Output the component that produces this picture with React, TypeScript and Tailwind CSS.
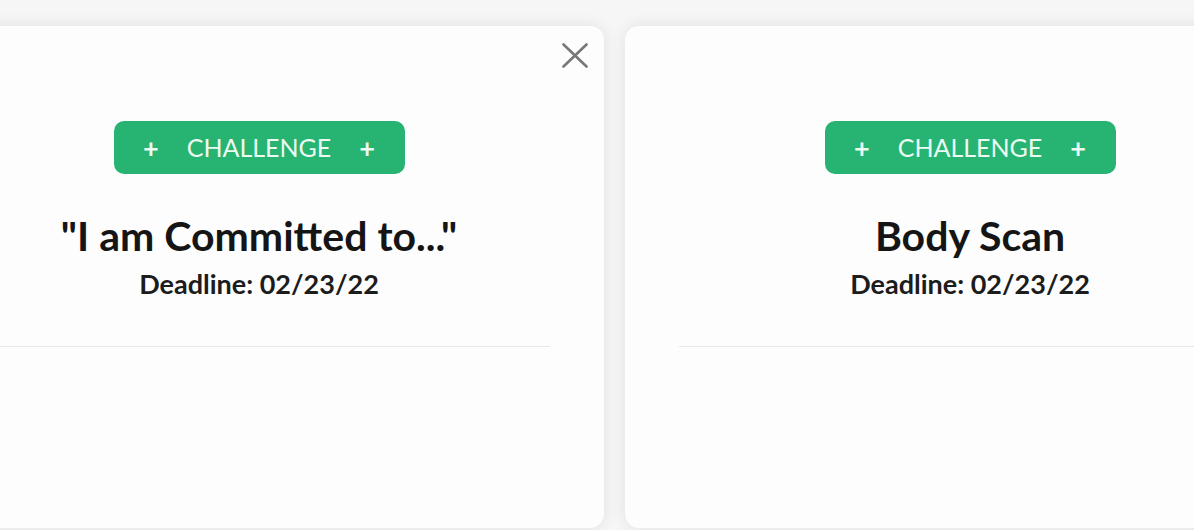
interface ChallengeCardProps {
  title: string;
  deadline: string;
  closable?: boolean;
}

function CloseIcon() {
  return (
    <svg width="26" height="25" viewBox="0 0 26 25" fill="none" stroke="currentColor" strokeWidth="2.6" strokeLinecap="round">
      <path d="M1.5 1.5 L24.5 23.5 M24.5 1.5 L1.5 23.5" />
    </svg>
  );
}

function ChallengeCard({ title, deadline, closable }: ChallengeCardProps) {
  return (
    <div className="relative flex h-[502px] w-[690px] shrink-0 flex-col items-center rounded-[14px] bg-[#fdfdfd] pt-[95px] shadow-[0_0_16px_rgba(0,0,0,0.09)]">
      {closable && (
        <button className="absolute right-[16px] top-[17px] text-[#777777]">
          <CloseIcon />
        </button>
      )}
      <button className="flex h-[53px] w-[291px] items-center justify-center gap-[28px] rounded-[10px] bg-[#27b372] text-[#ecfbf1]">
        <span className="text-[27px] font-bold leading-none">+</span>
        <span className="text-[25px] font-normal leading-none">CHALLENGE</span>
        <span className="text-[27px] font-bold leading-none">+</span>
      </button>
      <h2 className="mt-[38px] text-[41px] font-bold leading-[48px] text-[#151515]">{title}</h2>
      <p className="mt-[8px] text-[27px] font-bold leading-[32px] text-[#1c1c1c]">{deadline}</p>
      <div className="mt-[46px] h-px w-[calc(100%-108px)] bg-[#e7e8ec]" />
    </div>
  );
}

export default function App() {
  return (
    <div
      className="h-[530px] w-[1194px] overflow-hidden bg-[#f6f6f6] pt-[26px]"
      style={{ fontFamily: 'Lato, "Noto Sans", sans-serif' }}
    >
      <div className="-ml-[86px] flex gap-[21px]">
        <ChallengeCard title={'"I am Committed to..."'} deadline="Deadline: 02/23/22" closable />
        <ChallengeCard title="Body Scan" deadline="Deadline: 02/23/22" />
      </div>
    </div>
  );
}
